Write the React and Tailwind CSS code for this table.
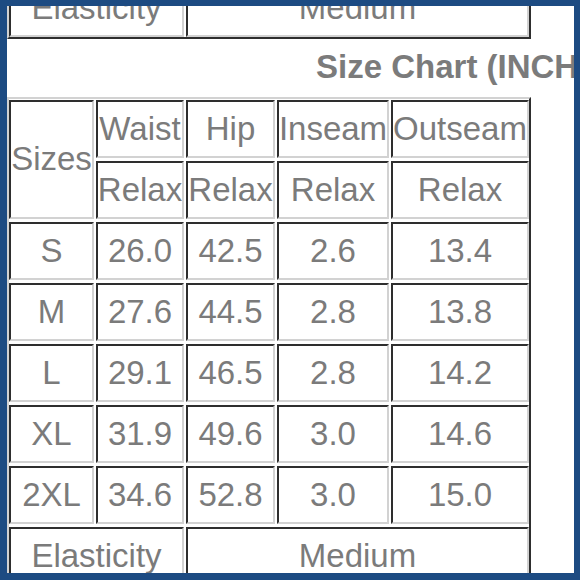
import React from "react";

const font = { fontFamily: '"Liberation Sans", Arial, sans-serif' };

function Cell({ children, className = "" }) {
  return (
    <div
      className={
        "flex items-center justify-center pb-[2px] border-2 border-t-[#2e2e2e] border-l-[#2e2e2e] border-r-[#d2d2d2] border-b-[#d2d2d2] text-[33px] leading-none text-[#7b7b7b] whitespace-nowrap overflow-hidden " +
        className
      }
    >
      {children}
    </div>
  );
}

const rows = [
  ["S", "26.0", "42.5", "2.6", "13.4"],
  ["M", "27.6", "44.5", "2.8", "13.8"],
  ["L", "29.1", "46.5", "2.8", "14.2"],
  ["XL", "31.9", "49.6", "3.0", "14.6"],
  ["2XL", "34.6", "52.8", "3.0", "15.0"],
];

export default function App() {
  return (
    <div
      className="w-[580px] h-[580px] box-border border-l-[7px] border-t-[6px] border-r-[6px] border-b-[7px] border-[#1d4b82] bg-white overflow-hidden"
      style={font}
    >
      <div className="w-[567px] h-[567px] overflow-hidden">
        {/* partial top table */}
        <div className="-mt-[30px] w-max border-t-2 border-l-2 border-t-[#d2d2d2] border-l-[#d2d2d2] border-r-2 border-b-2 border-r-[#2e2e2e] border-b-[#2e2e2e] pt-[1px]">
          <div className="grid grid-cols-[175px_343px] gap-x-[2px] auto-rows-[58px]">
            <Cell>Elasticity</Cell>
            <Cell>Medium</Cell>
          </div>
        </div>

        {/* heading */}
        <div className="mt-[11px] pl-[309px] h-[33px] text-[33px] leading-[33px] font-bold text-[#7b7b7b] whitespace-nowrap">
          Size Chart (INCHES)
        </div>

        {/* main table */}
        <div className="mt-[14px] w-max border-t-2 border-l-2 border-t-[#d2d2d2] border-l-[#d2d2d2] border-r-2 border-b-2 border-r-[#2e2e2e] border-b-[#2e2e2e] pt-[1px]">
          <div className="grid grid-cols-[85px_88px_89px_112px_138px] gap-x-[2px] gap-y-[3px] auto-rows-[58px]">
            <Cell className="row-span-2">Sizes</Cell>
            <Cell>Waist</Cell>
            <Cell>Hip</Cell>
            <Cell>Inseam</Cell>
            <Cell>Outseam</Cell>
            <Cell>Relax</Cell>
            <Cell>Relax</Cell>
            <Cell>Relax</Cell>
            <Cell>Relax</Cell>
            {rows.map((r) =>
              r.map((v, i) => <Cell key={r[0] + i}>{v}</Cell>)
            )}
            <Cell className="col-span-2">Elasticity</Cell>
            <Cell className="col-span-3">Medium</Cell>
          </div>
        </div>
      </div>
    </div>
  );
}
